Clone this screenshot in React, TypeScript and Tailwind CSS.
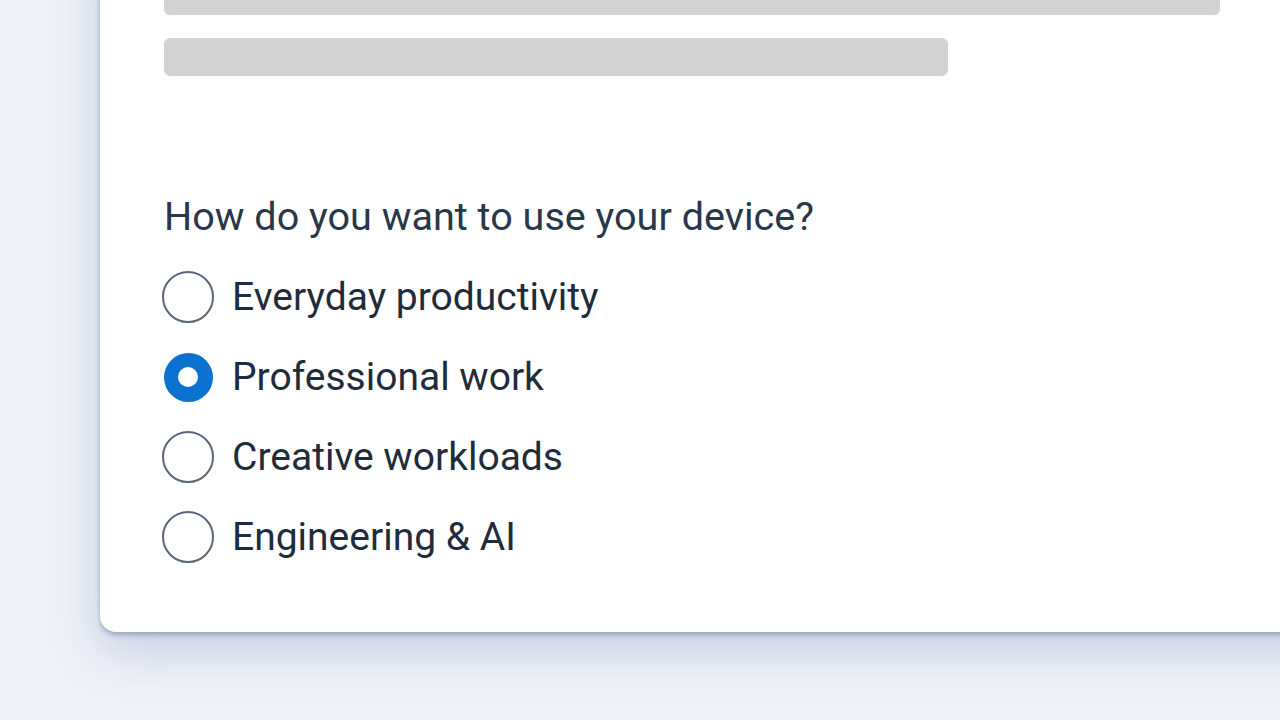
import React, { useState } from 'react';

const options = [
  'Everyday productivity',
  'Professional work',
  'Creative workloads',
  'Engineering & AI',
];

export default function App() {
  const [selected, setSelected] = useState('Professional work');

  return (
    <div className="h-screen w-full overflow-hidden bg-[#edf1f8] font-['Roboto',sans-serif]">
      <div className="ml-[100px] -mt-[60px] w-[1260px] rounded-b-[16px] bg-white pl-[64px] pt-[37px] pb-[55px] shadow-[0_3px_5px_rgba(110,128,165,0.55),0_18px_48px_rgba(110,130,175,0.3)]">
        <div className="h-[38px] w-[1056px] rounded-[6px] bg-[#d2d2d2]" />
        <div className="mt-[23px] h-[38px] w-[784px] rounded-[6px] bg-[#d2d2d2]" />

        <p className="mt-[121px] h-[40px] text-[39.6px] leading-[40px] text-[#283749]">
          How do you want to use your device?
        </p>

        <div className="mt-[20px] flex flex-col">
          {options.map(option => {
            const isOn = option === selected;
            return (
              <label
                key={option}
                className="flex h-[80px] cursor-pointer items-center"
                onClick={() => setSelected(option)}
              >
                <span className="flex h-[52px] w-[52px] -ml-[2px] items-center justify-center">
                  {isOn ? (
                    <span className="flex h-[49px] w-[49px] items-center justify-center rounded-full bg-[#0b72cf]">
                      <span className="h-[20px] w-[20px] rounded-full bg-white" />
                    </span>
                  ) : (
                    <span className="h-[52px] w-[52px] rounded-full border-2 border-[#5a6677] bg-white" />
                  )}
                </span>
                <span className="ml-[18px] text-[39px] leading-[40px] text-[#1f2c3c]">{option}</span>
              </label>
            );
          })}
        </div>
      </div>
    </div>
  );
}
